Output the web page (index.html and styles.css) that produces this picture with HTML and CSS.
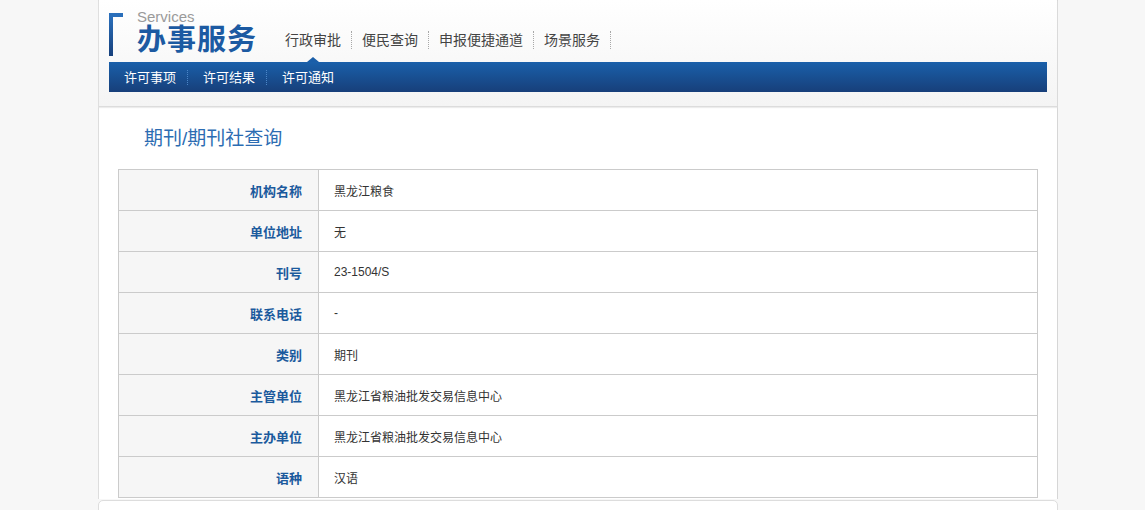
FILE: index.html
```html
<!DOCTYPE html>
<html lang="zh-CN">
<head>
  <meta charset="UTF-8" />
  <title>期刊/期刊社查询</title>
  <link rel="stylesheet" href="styles.css">
</head>
<body>
  <div class="wrap">
    <div class="page">

      <!-- Header -->
      <div class="header">
        <div class="top">
          <div class="logo">
            <span class="logo-mark"></span>
            <div class="logo-text">
              <span class="logo-en">Services</span>
              <span class="logo-cn">办事服务</span>
            </div>
          </div>
          <ul class="nav">
            <li class="active">行政审批</li>
            <li>便民查询</li>
            <li>申报便捷通道</li>
            <li>场景服务</li>
          </ul>
        </div>
        <ul class="subnav">
          <li>许可事项</li>
          <li>许可结果</li>
          <li>许可通知</li>
        </ul>
      </div>

      <!-- Content -->
      <div class="content">
        <h2 class="title">期刊/期刊社查询</h2>
        <table class="info">
          <tr><th>机构名称</th><td>黑龙江粮食</td></tr>
          <tr><th>单位地址</th><td>无</td></tr>
          <tr><th>刊号</th><td>23-1504/S</td></tr>
          <tr><th>联系电话</th><td>-</td></tr>
          <tr><th>类别</th><td>期刊</td></tr>
          <tr><th>主管单位</th><td>黑龙江省粮油批发交易信息中心</td></tr>
          <tr><th>主办单位</th><td>黑龙江省粮油批发交易信息中心</td></tr>
          <tr><th>语种</th><td>汉语</td></tr>
        </table>
      </div>
    </div>

    <div class="footer"></div>
  </div>
</body>
</html>
```

FILE: styles.css
```css
* {
  box-sizing: border-box;
}

body {
  margin: 0;
  background: #f7f7f7;
  font-family: Arial, "Liberation Sans", "Noto Sans CJK SC", sans-serif;
  color: #333;
}

ul {
  list-style: none;
  margin: 0;
  padding: 0;
}

.wrap {
  width: 971px;
  margin: 0 auto;
  padding-left: 11px;
}

.page {
  width: 960px;
  background: #fff;
  border-left: 1px solid #ddd;
  border-right: 1px solid #d6d6d6;
}

/* header */
.header {
  background: linear-gradient(#fff, #f4f4f4);
  border-bottom: 1px solid #dcdcdc;
  box-shadow: 0 1px 1px #ececec;
}

.top {
  height: 62px;
  display: flex;
  align-items: flex-end;
  padding-left: 10px;
}

.logo {
  display: flex;
  height: 62px;
  padding-top: 13px;
}

.logo-mark {
  width: 14px;
  height: 43px;
  border-left: 4px solid #1a4f90;
  border-top: 4px solid #2467b0;
  border-image: linear-gradient(#2a6fbb, #163f7a) 1;
}

.logo-text {
  display: flex;
  flex-direction: column;
  margin-left: 14px;
  margin-top: -4px;
}

.logo-en {
  font-size: 15px;
  line-height: 15px;
  color: #9a9a9a;
}

.logo-cn {
  font-size: 29px;
  line-height: 32px;
  font-weight: bold;
  color: #1c5aa2;
  letter-spacing: 1px;
}

.nav {
  display: flex;
  margin-left: 18px;
  margin-bottom: 13px;
}

.nav li {
  position: relative;
  font-size: 14px;
  line-height: 18px;
  color: #444;
  padding: 0 10px;
  border-right: 1px dotted #a8a8a8;
}

.nav li.active::after {
  content: "";
  position: absolute;
  left: 50%;
  bottom: -13px;
  margin-left: -6px;
  border: 6px solid transparent;
  border-bottom: 5px solid #1a5ea8;
  border-top: none;
}

.subnav {
  display: flex;
  align-items: center;
  height: 30px;
  margin: 0 10px 14px;
  background: linear-gradient(#1a60aa, #173f7a);
}

.subnav li {
  font-size: 13px;
  line-height: 15px;
  color: #fff;
  padding: 0 11px 0 15px;
  border-right: 1px dotted #4b86c8;
}

.subnav li:last-child {
  border-right: none;
}

/* content */
.content {
  padding: 19px 20px 1px 19px;
}

.title {
  margin: 0 0 17px 26px;
  font-size: 19px;
  line-height: 26px;
  font-weight: normal;
  color: #2c6cb2;
}

.info {
  width: 920px;
  border-collapse: collapse;
  font-size: 12px;
}

.info th,
.info td {
  height: 41px;
  border: 1px solid #cbcbcb;
}

.info th {
  width: 200px;
  background: #f6f6f6;
  text-align: right;
  padding-right: 16px;
  font-size: 13px;
  color: #1b5a9d;
}

.info td {
  padding-left: 15px;
  color: #333;
}

.footer {
  height: 20px;
  margin-top: 1px;
  width: 960px;
  background: #fff;
  border: 1px solid #ddd;
  border-radius: 5px 5px 0 0;
}
```
